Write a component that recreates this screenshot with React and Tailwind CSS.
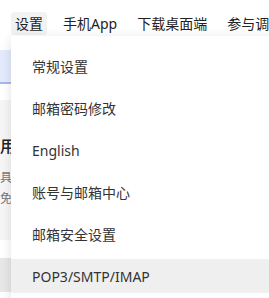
import React from "react";

const navItems = ["设置", "手机App", "下载桌面端", "参与调研"];

const menuItems = [
  "常规设置",
  "邮箱密码修改",
  "English",
  "账号与邮箱中心",
  "邮箱安全设置",
  "POP3/SMTP/IMAP",
];

const font = {
  fontFamily: '"Noto Sans", "Noto Sans CJK SC", sans-serif',
};

export default function App() {
  return (
    <div
      className="relative w-[269px] h-[298px] overflow-hidden bg-white text-[#333]"
      style={font}
    >
      {/* top navigation */}
      <div className="flex h-9 items-start gap-3 pl-[11px] pt-3 whitespace-nowrap">
        {navItems.map((label, idx) => (
          <div
            key={label}
            className={
              idx === 0
                ? "flex h-[23px] items-center rounded-[3px] bg-[#f2f2f2] px-1 text-[14px] text-[#222]"
                : "flex h-[23px] items-center px-1 text-[14px] text-[#222]"
            }
          >
            {label}
          </div>
        ))}
      </div>

      {/* page behind the menu, only its left edge shows */}
      <div className="flex w-[11px] flex-col overflow-hidden">
        <div className="h-[14px]" />
        <div className="h-[34px] border-b-2 border-[#a7b8ec] bg-[#e2eafc]" />
        <div className="h-4" />
        <div className="h-[140px] bg-[#f6f6f6] pt-[34px] whitespace-nowrap">
          <div className="text-[16px] leading-6 font-medium text-[#222]">用户设置</div>
          <div className="mt-[9px] text-[12px] leading-[21px] text-[#777]">
            <div>具有更多功能</div>
            <div>免使用客户端</div>
          </div>
        </div>
        <div className="h-[18px]" />
        <div className="h-[34px] bg-[#e7e7e7]" />
      </div>

      {/* dropdown menu */}
      <div className="absolute left-[11px] top-[36px] right-[-20px] bottom-[-20px] bg-white pt-[13px] shadow-[0_2px_10px_rgba(0,0,0,0.12)]">
        <div className="flex flex-col gap-2">
          {menuItems.map((label, idx) => (
            <div
              key={label}
              className={
                idx === menuItems.length - 1
                  ? "flex h-[34px] items-center bg-[#efefef] px-[21px] text-[14px] text-[#333]"
                  : "flex h-[34px] items-center px-[21px] text-[14px] text-[#333]"
              }
            >
              {label}
            </div>
          ))}
        </div>
      </div>
    </div>
  );
}
